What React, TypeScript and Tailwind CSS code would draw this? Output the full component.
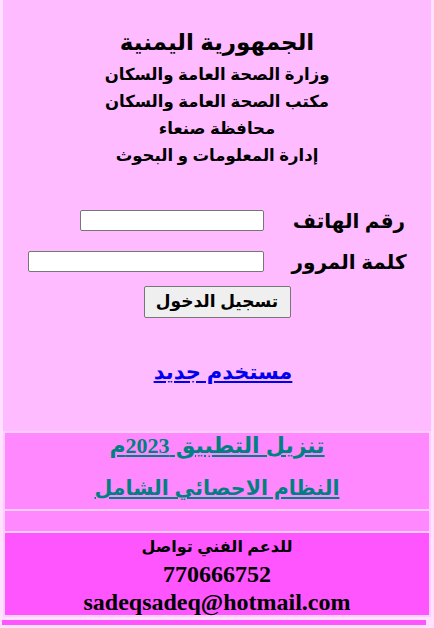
import React from 'react';

const arabic = { fontFamily: '"Liberation Sans", "DejaVu Sans", Arial, sans-serif' };
const serif = { fontFamily: '"Liberation Serif", "DejaVu Serif", serif' };

const headerLines = [
  'وزارة الصحة العامة والسكان',
  'مكتب الصحة العامة والسكان',
  'محافظة صنعاء',
  'إدارة المعلومات و البحوث',
];

export default function App() {
  return (
    <div dir="rtl" className="min-h-screen w-[434px] bg-[#ffe0ff] overflow-hidden" style={arabic}>
      <div className="mx-[3px] bg-[#ffbbff] text-black">
        {/* header */}
        <div className="pt-[23px] flex flex-col items-center text-center font-bold">
          <h1 className="text-[23px] leading-[38px]">الجمهورية اليمنية</h1>
          {headerLines.map((line) => (
            <p key={line} className="text-[16.5px] leading-[27px]">{line}</p>
          ))}
        </div>

        {/* login form */}
        <form className="mt-[31px] flex flex-col" onSubmit={(e) => e.preventDefault()}>
          <div className="h-[41px] flex items-center gap-[3px]">
            <label className="w-[164px] text-center text-[20px] font-bold">رقم الهاتف</label>
            <input className="w-[184px] h-[21px] bg-white border border-[#767676] rounded-[2px]" />
          </div>
          <div className="h-[41px] flex items-center gap-[3px]">
            <label className="w-[164px] text-center text-[20px] font-bold">كلمة المرور</label>
            <input type="password" className="w-[236px] h-[21px] bg-white border border-[#767676] rounded-[2px]" />
          </div>
          <div className="mt-[4px] flex justify-center">
            <button className="w-[147px] h-[32px] bg-[#efefef] border border-[#767676] rounded-[2px] text-[17px] font-bold">
              تسجيل الدخول
            </button>
          </div>
        </form>

        <div className="mt-[39px] pl-[12px] text-center leading-[30px]">
          <a href="#" className="text-[#0000ee] underline text-[21px] font-bold">مستخدم جديد</a>
        </div>

        {/* footer table */}
        <div className="mt-[42px] bg-[#ffccff] p-[2px] flex flex-col gap-[2px] text-center font-bold">
          <div className="bg-[#ff88ff] h-[76px] text-[22px] leading-[26px]">
            <a href="#" className="block text-[#008080] underline">
              تنزيل التطبيق <span style={serif}>2023</span>م
            </a>
            <a href="#" className="block mt-[16px] text-[#008080] underline text-[20.5px]">النظام الاحصائي الشامل</a>
          </div>
          <div className="bg-[#ff88ff] h-[20px]" />
          <div className="bg-[#ff55ff] h-[82px] pt-[1px]">
            <p className="text-[16px] leading-[26px]">للدعم الفني تواصل</p>
            <p className="text-[24px] leading-[28px]" style={serif}>770666752</p>
            <p className="text-[24px] leading-[28px]" style={serif}>sadeqsadeq@hotmail.com</p>
          </div>
        </div>
      </div>
      <div className="mt-[3px] mr-[8px] ml-[2px] h-[5px] bg-[#ff55ff]" />
    </div>
  );
}
